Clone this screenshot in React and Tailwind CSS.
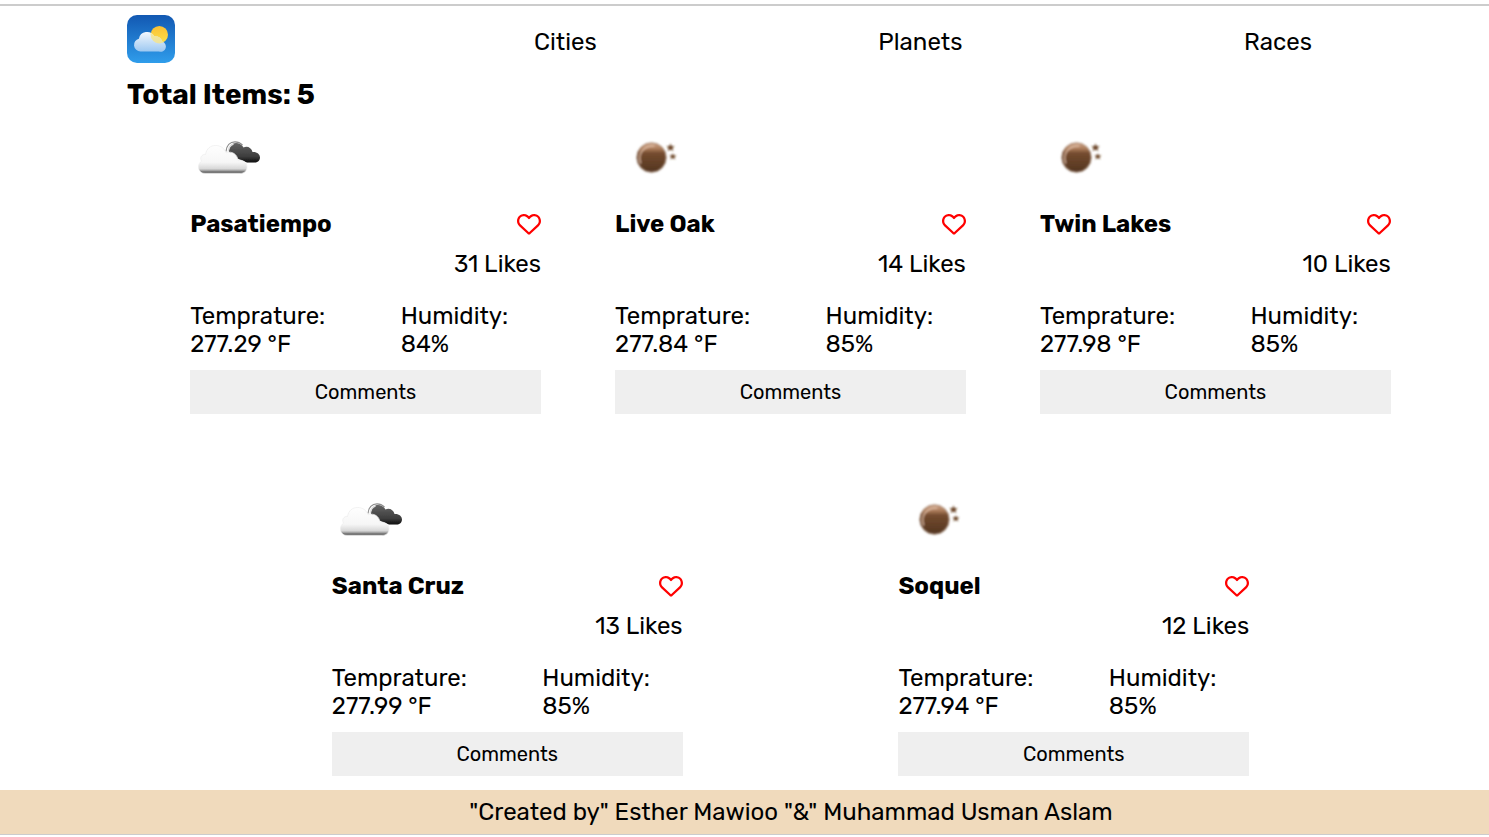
import { FaRegHeart } from "react-icons/fa6";

const cities = [
  { name: "Pasatiempo", likes: 31, temperature: "277.29", humidity: 84, icon: "clouds" },
  { name: "Live Oak", likes: 14, temperature: "277.84", humidity: 85, icon: "night" },
  { name: "Twin Lakes", likes: 10, temperature: "277.98", humidity: 85, icon: "night" },
  { name: "Santa Cruz", likes: 13, temperature: "277.99", humidity: 85, icon: "clouds" },
  { name: "Soquel", likes: 12, temperature: "277.94", humidity: 85, icon: "night" },
];

function Logo() {
  return (
    <svg viewBox="0 0 48 48" className="block size-12" role="img" aria-label="Weather">
      <defs>
        <linearGradient id="logo-sky" x1="0" y1="0" x2="0" y2="1">
          <stop offset="0" stopColor="#1258b2" />
          <stop offset="1" stopColor="#2f9deb" />
        </linearGradient>
        <linearGradient id="logo-sun" x1="0" y1="0" x2="0" y2="1">
          <stop offset="0" stopColor="#fbc034" />
          <stop offset="1" stopColor="#fbe04a" />
        </linearGradient>
        <linearGradient id="logo-cloud" x1="0" y1="0" x2="0" y2="1">
          <stop offset="0" stopColor="#f3f7fd" />
          <stop offset="1" stopColor="#9cc8f1" />
        </linearGradient>
        <clipPath id="logo-cloud-clip">
          <path d="M13.500 36.500a6.500 6.500 0 0 1-1.600-12.800a8.300 8.300 0 0 1 15.400-2.400a7 7 0 0 1 8 5.200a5.200 5.200 0 0 1-3.300 10z" />
        </clipPath>
      </defs>
      <rect width="48" height="48" rx="10" fill="url(#logo-sky)" />
      <circle cx="32.300" cy="19.700" r="8.700" fill="url(#logo-sun)" />
      <path
        d="M13.500 36.500a6.500 6.500 0 0 1-1.600-12.800a8.300 8.300 0 0 1 15.400-2.400a7 7 0 0 1 8 5.200a5.200 5.200 0 0 1-3.300 10z"
        fill="url(#logo-cloud)"
      />
      <circle cx="32.300" cy="19.700" r="8.700" fill="#f5e48c" opacity="0.850" clipPath="url(#logo-cloud-clip)" />
    </svg>
  );
}

function CloudsIcon({ id }) {
  return (
    <svg viewBox="0 0 78 60" className="block h-[60px] w-[78px]" role="img" aria-label="Broken clouds">
      <defs>
        <linearGradient id={`${id}-front`} x1="0" y1="0" x2="0" y2="1">
          <stop offset="0" stopColor="#fefefe" />
          <stop offset="0.600" stopColor="#f6f6f6" />
          <stop offset="0.830" stopColor="#d8d8d8" />
          <stop offset="0.890" stopColor="#a8a8a8" />
          <stop offset="0.920" stopColor="#7e7e7e" />
          <stop offset="1" stopColor="#747474" />
        </linearGradient>
        <linearGradient id={`${id}-back`} x1="0" y1="0" x2="0" y2="1">
          <stop offset="0" stopColor="#646464" />
          <stop offset="0.700" stopColor="#3c3c3c" />
          <stop offset="1" stopColor="#0c0c0c" />
        </linearGradient>
        <filter id={`${id}-soft`} x="-10%" y="-10%" width="120%" height="125%">
          <feGaussianBlur stdDeviation="0.600" />
        </filter>
      </defs>
      <g filter={`url(#${id}-soft)`}>
        <path
          d="M39 22C39 16 42 13 46 13C49 13 52 14.500 53.500 17.500C57 15.500 61.500 17.500 62.500 22C66.500 21.500 70 24 70 27.500C70 30.500 67.500 32.500 64.500 32.500H57L46 28z"
          fill={`url(#${id}-back)`}
        />
        <path d="M36 21.500C36.500 15.500 40 11.800 45 11.800C48 11.800 50.500 13 52.500 15" fill="none" stroke="#8c8c8c" strokeWidth="1.200" />
        <path d="M38.200 21.500C38.500 17.500 40.500 15 43.500 14" fill="none" stroke="#dedede" strokeWidth="1.400" />
        <path
          d="M15 43.500C11 43.500 8.500 40.500 8.500 37C8.500 34.500 9.500 32.500 11.500 31.200C9.500 27.500 12 24 15.500 24.500C16.500 18.500 20.500 15.500 25.500 15.500C31 15.500 34.500 18.500 36 22.800C42 20.500 47.500 24.500 48 30.300C53 29.500 57 32.500 57 37C57 40.800 54 43.500 50.500 43.500z"
          fill={`url(#${id}-front)`}
          stroke="#ececec"
          strokeWidth="0.700"
        />
      </g>
    </svg>
  );
}

function NightIcon({ id }) {
  return (
    <svg viewBox="0 0 78 60" className="block h-[60px] w-[78px]" role="img" aria-label="Clear night">
      <defs>
        <linearGradient id={`${id}-moon`} x1="0" y1="0" x2="0" y2="1">
          <stop offset="0" stopColor="#d0a78c" />
          <stop offset="0.200" stopColor="#ac7c5a" />
          <stop offset="0.350" stopColor="#754c2f" />
          <stop offset="1" stopColor="#523420" />
        </linearGradient>
        <filter id={`${id}-soft`} x="-10%" y="-10%" width="120%" height="120%">
          <feGaussianBlur stdDeviation="0.800" />
        </filter>
      </defs>
      <g filter={`url(#${id}-soft)`}>
        <circle cx="36.500" cy="27.500" r="14.700" fill={`url(#${id}-moon)`} stroke="#9c7d68" strokeWidth="0.800" />
        <path d="M25.500 33C22.500 24 28 15.500 39 16" fill="none" stroke="#dfbca4" strokeWidth="1.300" strokeLinecap="round" />
        <path d="M55.500 13.500l1 2.500h3l-2 2l0.800 3l-2.800-1.600l-2.800 1.600l0.800-3l-2-2h3z" fill="#6b4426" />
        <path d="M57.800 23.200l0.900 2h2.600l-1.800 1.700l0.700 2.600l-2.400-1.400l-2.400 1.400l0.700-2.600l-1.800-1.700h2.600z" fill="#6b4426" />
      </g>
    </svg>
  );
}

function CityCard({ city, id }) {
  const Icon = city.icon === "clouds" ? CloudsIcon : NightIcon;
  return (
    <article className="mb-[78px] w-[26%] min-w-[300px]">
      <Icon id={id} />
      <div className="mt-5 flex h-7 items-center justify-between">
        <h2 className="font-bold">{city.name}</h2>
        <button type="button" aria-label={`Like ${city.name}`} className="text-[#f00]">
          <FaRegHeart className="size-6" />
        </button>
      </div>
      <p className="mt-3 text-right">{city.likes} Likes</p>
      <div className="mt-6 grid grid-cols-[3fr_2fr]">
        <p>
          Temprature:
          <br />
          {city.temperature} °F
        </p>
        <p>
          Humidity:
          <br />
          {city.humidity}%
        </p>
      </div>
      <button type="button" className="mt-3 block h-11 w-full bg-[#efefef] text-[20px]">
        Comments
      </button>
    </article>
  );
}

export default function App() {
  return (
    <div className="bg-white pt-1 font-['Rubik','Inter',sans-serif] text-[24px] leading-7 text-black">
      <div className="border-t-2 border-b border-[#ccc]">
        <header className="flex items-center pt-[9px] pr-[177px] pl-[127px]">
          <a href="#home">
            <Logo />
          </a>
          <nav className="ml-[359px] flex-1">
            <ul className="flex justify-between pt-1.5">
              <li><a href="#cities">Cities</a></li>
              <li><a href="#planets">Planets</a></li>
              <li><a href="#races">Races</a></li>
            </ul>
          </nav>
        </header>
        <main>
          <h1 className="mt-[18px] pl-[127px] text-[28px] font-bold">Total Items: 5</h1>
          <section className="mt-[21px] -mb-16 flex flex-wrap justify-evenly pr-6 pl-[116px]">
            {cities.map((city, i) => (
              <CityCard key={city.name} city={city} id={`weather-${i}`} />
            ))}
          </section>
        </main>
        <footer className="bg-[#f0dabc] py-2 pl-[93px] text-center">
          "Created by" Esther Mawioo "&amp;" Muhammad Usman Aslam
        </footer>
      </div>
    </div>
  );
}
